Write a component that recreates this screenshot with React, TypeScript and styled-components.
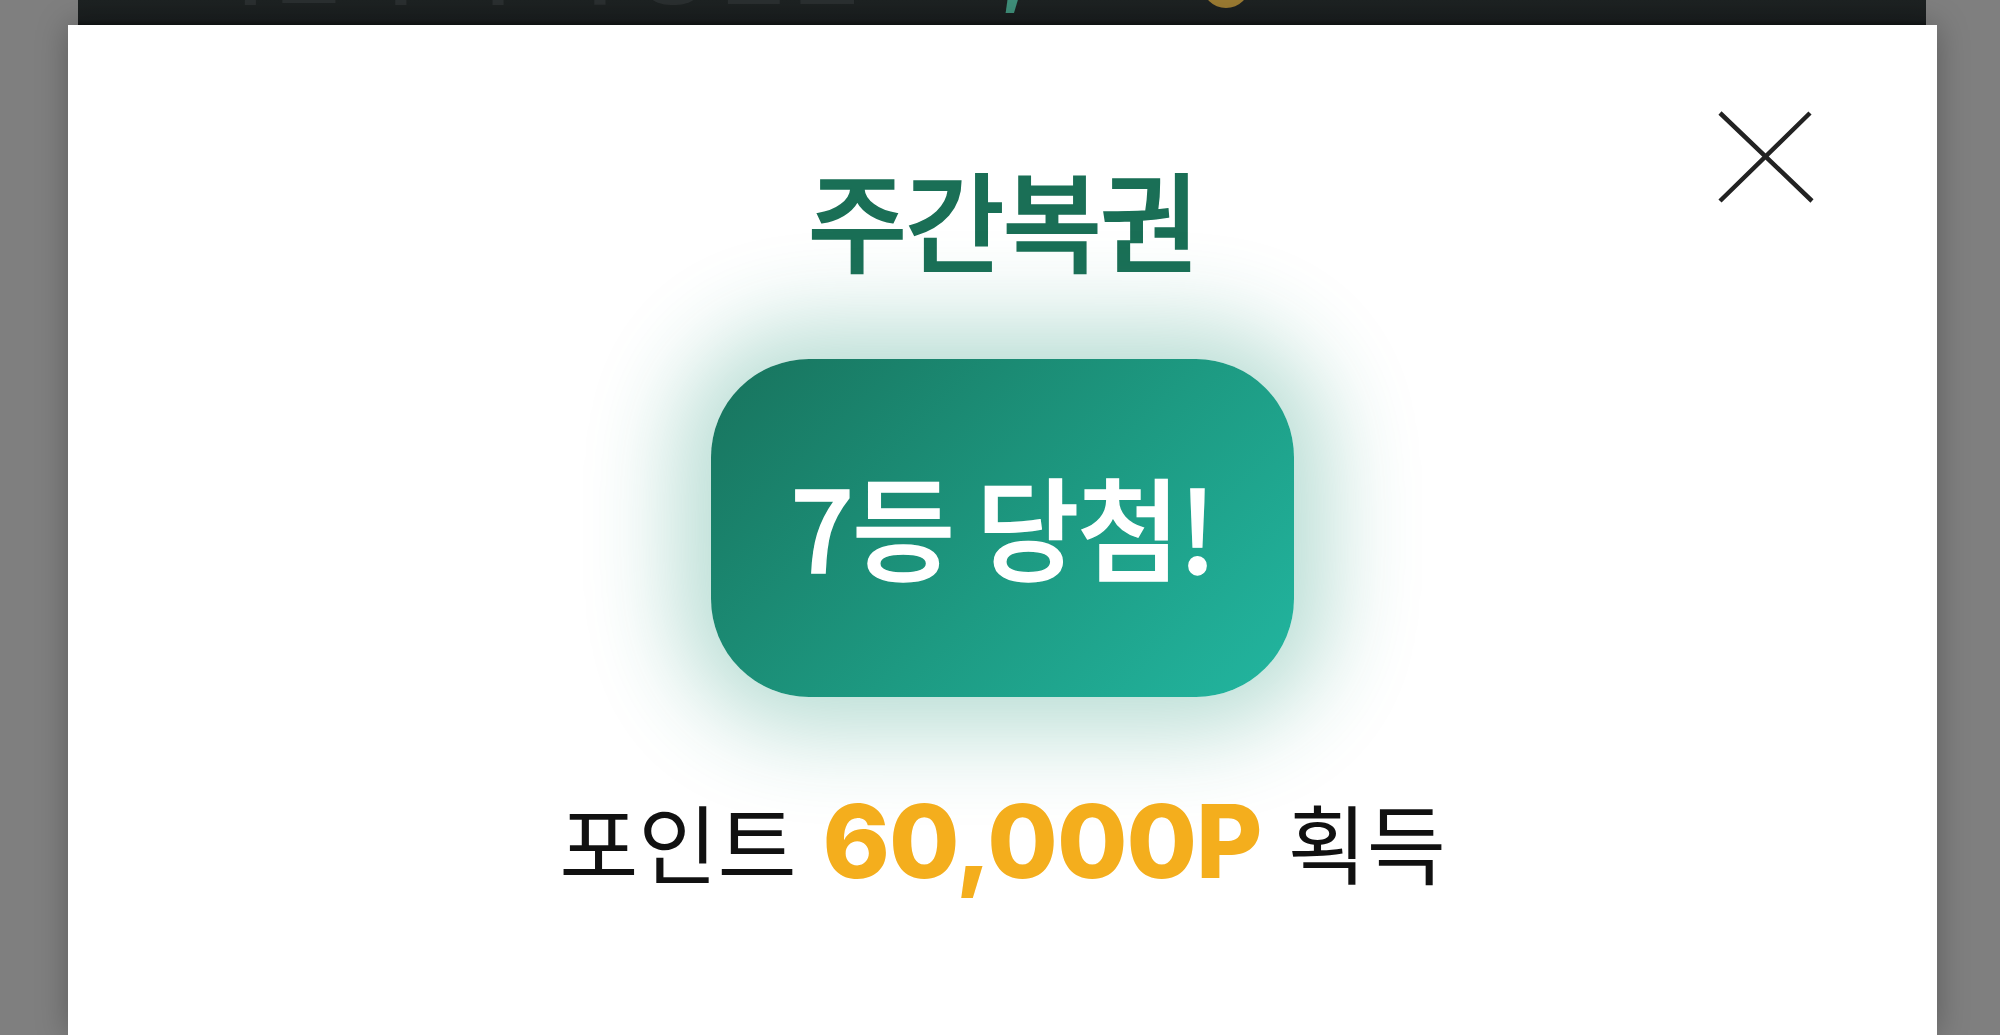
import styled, { createGlobalStyle } from "styled-components";

// page reset and backdrop colour
const GlobalStyle = createGlobalStyle`
  html, body {
    margin: 0;
    padding: 0;
    background: #7f7f7f;
    overflow: hidden;
  }
  #root {
    height: 1035px;
  }
`;

const Backdrop = styled.div`
  height: 1035px;
  background: #7f7f7f;
  display: flex;
  flex-direction: column;
`;

// the page behind the dim layer, only its lower edge peeks out
const BehindPanel = styled.div`
  height: 25px;
  margin: 0 74px 0 78px;
  background: linear-gradient(180deg, #1d2222 0%, #1a1e1f 80%, #121515 100%);
  overflow: hidden;
  display: flex;
  align-items: flex-end;
  padding-left: 110px;
  gap: 26px;
`;

const BehindText = styled.span<{ $teal?: boolean }>`
  font-family: Inter, "Noto Sans CJK KR", sans-serif;
  font-size: 84px;
  line-height: 84px;
  font-weight: 700;
  margin-bottom: 16px;
  color: ${(p) => (p.$teal ? "#3f8f7a" : "#2a2f30")};
  white-space: nowrap;
`;

const Coin = styled.span`
  width: 48px;
  height: 48px;
  border-radius: 50%;
  background: #9a7a32;
  margin-bottom: 17px;
  margin-left: -20px;
`;

const Modal = styled.div`
  position: relative;
  margin-left: 68px;
  width: 1869px;
  flex: 1;
  background: #ffffff;
  box-shadow: 0 0 30px rgba(0, 0, 0, 0.28);
  display: flex;
  flex-direction: column;
  align-items: center;
`;

const CloseButton = styled.button`
  position: absolute;
  top: 85px;
  right: 122px;
  width: 98px;
  height: 96px;
  padding: 0;
  border: none;
  background: transparent;
  cursor: pointer;
`;

const Title = styled.h1`
  margin: 138px 0 0;
  font-family: "Noto Sans CJK KR", sans-serif;
  font-size: 108px;
  line-height: 108px;
  font-weight: 500;
  color: #1a6f56;
  letter-spacing: -2px;
  -webkit-text-stroke: 1.6px #1a6f56;
`;

const PrizeBadge = styled.div`
  margin-top: 88px;
  width: 583px;
  height: 338px;
  border-radius: 98px;
  background: linear-gradient(135deg, #18735d 0%, #1d9a82 55%, #22b6a0 100%);
  box-shadow: 0 0 90px 34px rgba(34, 150, 122, 0.32);
  display: flex;
  align-items: center;
  justify-content: center;
`;

const PrizeText = styled.span`
  font-family: "Noto Sans CJK KR", sans-serif;
  font-size: 112px;
  line-height: 1;
  font-weight: 500;
  color: #ffffff;
  letter-spacing: -2px;
  -webkit-text-stroke: 1.4px #ffffff;
  padding-bottom: 8px;
`;

const RewardLine = styled.p`
  margin: 94px 0 0;
  display: flex;
  align-items: baseline;
  gap: 26px;
  font-family: "Noto Sans CJK KR", sans-serif;
  font-size: 86px;
  line-height: 100px;
  font-weight: 400;
  color: #111111;
`;

const Points = styled.span`
  font-family: Inter, "Liberation Sans", sans-serif;
  font-size: 102px;
  font-weight: 800;
  color: #f4ae1d;
  letter-spacing: -1px;
`;

const CloseIcon = () => (
  <svg width="98" height="96" viewBox="0 0 98 96">
    <path
      d="M3 3 L95 91 M93 3 L3 91"
      stroke="#222222"
      strokeWidth="4.5"
      strokeLinecap="butt"
      fill="none"
    />
  </svg>
);

export default function App() {
  return (
    <>
      <GlobalStyle />
      <Backdrop>
        <BehindPanel>
          <BehindText>이번 주 누적 당첨금</BehindText>
          <BehindText $teal>60,000</BehindText>
          <Coin />
        </BehindPanel>
        <Modal>
          <CloseButton aria-label="닫기">
            <CloseIcon />
          </CloseButton>
          <Title>주간복권</Title>
          <PrizeBadge>
            <PrizeText>7등 당첨!</PrizeText>
          </PrizeBadge>
          <RewardLine>
            <span>포인트</span>
            <Points>60,000P</Points>
            <span>획득</span>
          </RewardLine>
        </Modal>
      </Backdrop>
    </>
  );
}
